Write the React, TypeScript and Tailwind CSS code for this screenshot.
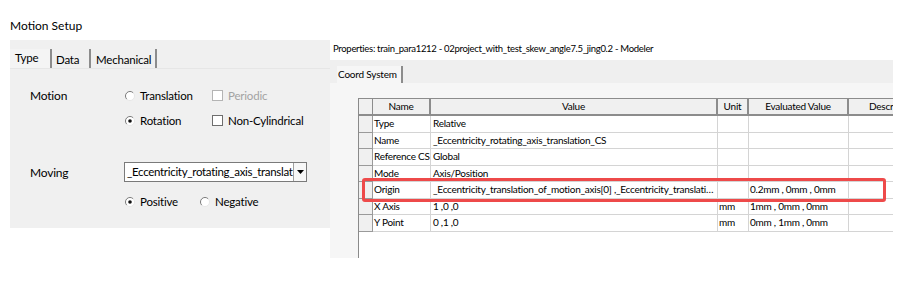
import React from "react";

const font = { fontFamily: 'Lato, "Liberation Sans", sans-serif' };

function Radio({ checked }: { checked?: boolean }) {
  return (
    <svg width="10" height="10" viewBox="0 0 10 10" className="shrink-0">
      <circle cx="5" cy="5" r="4.5" fill="#ffffff" />
      <path d="M8.2 1.8 A4.5 4.5 0 0 0 1.8 8.2" stroke="#7a7a7a" strokeWidth="1" fill="none" />
      <path d="M8.2 1.8 A4.5 4.5 0 0 1 1.8 8.2" stroke="#e6e6e6" strokeWidth="1" fill="none" />
      {checked && <circle cx="5" cy="5" r="1.8" fill="#111" />}
    </svg>
  );
}

function Check({ disabled }: { disabled?: boolean }) {
  return (
    <span
      className={
        "inline-block w-[11px] h-[11px] shrink-0 bg-white border " +
        (disabled ? "border-[#b4b4b4]" : "border-[#6e6e6e]")
      }
    />
  );
}

type Row = { name: string; value: string; unit: string; ev: string };
const rows: Row[] = [
  { name: "Type", value: "Relative", unit: "", ev: "" },
  { name: "Name", value: "_Eccentricity_rotating_axis_translation_CS", unit: "", ev: "" },
  { name: "Reference CS", value: "Global", unit: "", ev: "" },
  { name: "Mode", value: "Axis/Position", unit: "", ev: "" },
  {
    name: "Origin",
    value:
      "_Eccentricity_translation_of_motion_axis[0] ,_Eccentricity_translation_of_motion_axis[1] ,0mm",
    unit: "",
    ev: "0.2mm , 0mm , 0mm",
  },
  { name: "X Axis", value: "1 ,0 ,0", unit: "mm", ev: "1mm , 0mm , 0mm" },
  { name: "Y Point", value: "0 ,1 ,0", unit: "mm", ev: "0mm , 1mm , 0mm" },
];

const cols = "grid grid-cols-[14px_58px_287px_31px_100px_1fr]";

export default function App() {
  return (
    <div className="w-[924px] h-[304px] bg-white flex text-black overflow-hidden" style={font}>
      {/* Left: Motion Setup */}
      <div className="w-[330px] shrink-0 flex flex-col">
        <div className="h-[40px] pl-[10px] pt-[17px] text-[12px] leading-[18px]">Motion Setup</div>
        <div className="ml-[10px] w-[320px] h-[188px] bg-[#f0f0f0] flex flex-col">
          {/* tabs */}
          <div className="h-[29px] pt-[9px] flex items-stretch text-[11.5px] tracking-[-0.2px] border-b border-[#e6e6e6]">
            <div className="w-[42px] shrink-0 pl-[5px] border-r-2 border-[#8c8c8c] leading-[17px] bg-[#f4f4f4]">Type</div>
            <div className="w-[39px] shrink-0 pl-[4px] border-r-2 border-[#8c8c8c] leading-[19px] pt-[1px]">Data</div>
            <div className="w-[66px] shrink-0 pl-[5px] border-r-2 border-[#8c8c8c] leading-[19px] pt-[1px] whitespace-nowrap">Mechanical</div>
          </div>
          <div className="flex flex-col text-[11.5px] tracking-[-0.2px]">
            <div className="flex items-center h-[25px] mt-[14px]">
              <div className="w-[115px] shrink-0 pl-[20px] text-[12px]">Motion</div>
              <div className="w-[87px] shrink-0 flex items-center gap-[5px]">
                <Radio />
                <span>Translation</span>
              </div>
              <div className="flex items-center gap-[5px] text-[#a3a3a3]">
                <Check disabled />
                <span>Periodic</span>
              </div>
            </div>
            <div className="flex items-center h-[25px]">
              <div className="w-[115px] shrink-0" />
              <div className="w-[87px] shrink-0 flex items-center gap-[5px]">
                <Radio checked />
                <span>Rotation</span>
              </div>
              <div className="flex items-center gap-[5px]">
                <Check />
                <span>Non-Cylindrical</span>
              </div>
            </div>
            <div className="flex items-center h-[20px] mt-[29px]">
              <div className="w-[114px] shrink-0 pl-[20px] pt-[2px] text-[12px]">Moving</div>
              <div className="w-[183px] shrink-0 h-[20px] bg-white border border-[#7a7a7a] flex items-stretch">
                <div className="flex-1 pl-[2px] leading-[18px] overflow-hidden whitespace-nowrap tracking-[-0.3px]">
                  _Eccentricity_rotating_axis_translat
                </div>
                <div className="w-[13px] shrink-0 border-l border-[#a0a0a0] bg-[#f7f7f7] flex items-center justify-center">
                  <svg width="7" height="4" viewBox="0 0 7 4">
                    <path d="M0 0 H7 L3.5 4 Z" fill="#000" />
                  </svg>
                </div>
              </div>
            </div>
            <div className="flex items-center h-[24px] mt-[8px]">
              <div className="w-[115px] shrink-0" />
              <div className="w-[75px] shrink-0 flex items-center gap-[5px]">
                <Radio checked />
                <span>Positive</span>
              </div>
              <div className="flex items-center gap-[5px]">
                <Radio />
                <span>Negative</span>
              </div>
            </div>
          </div>
        </div>
      </div>

      {/* Right: Properties */}
      <div className="w-[563px] shrink-0 flex flex-col">
        <div className="h-[60px] pl-[3px] pt-[41px] text-[9.5px] tracking-[-0.3px] leading-[16px] whitespace-nowrap">
          Properties: train_para1212 - 02project_with_test_skew_angle7.5_jing0.2 - Modeler
        </div>
        <div className="h-[198px] bg-[#f6f6f6] flex flex-col">
          <div className="h-[23px] bg-[#efefef] flex items-end pl-[7px]">
            <div className="h-[17px] pl-[1px] pr-[4px] border-r-2 border-[#8c8c8c] text-[10px] tracking-[-0.2px] leading-[16px] bg-[#f6f6f6] whitespace-nowrap">
              Coord System
            </div>
          </div>
          <div className="flex-1 pt-[15px] pl-[28px] relative">
            <div className="w-[535px] h-[160px] bg-white border-l border-[#8a8a8a] text-[10px] tracking-[-0.25px] overflow-hidden">
              <div className={cols + " h-[18px] bg-[#f0f0f0] border-t border-b-2 border-[#8c8c8c]"}>
                <div className="border-r border-[#8c8c8c]" />
                <div className="border-r-2 border-[#8c8c8c] text-center leading-[15px]">Name</div>
                <div className="border-r-2 border-[#8c8c8c] text-center leading-[15px]">Value</div>
                <div className="border-r-2 border-[#8c8c8c] text-center leading-[15px]">Unit</div>
                <div className="border-r-2 border-[#8c8c8c] text-center leading-[15px]">Evaluated Value</div>
                <div className="pl-[20px] leading-[15px] whitespace-nowrap overflow-hidden">Description</div>
              </div>
              {rows.map((r) => (
                <div key={r.name} className={cols + " h-[16.5px] leading-[15px]"}>
                  <div className="bg-[#f0f0f0] border-r border-b border-[#9a9a9a]" />
                  <div className="pl-[1px] border-r border-b border-[#d4d4d4] whitespace-nowrap overflow-hidden">{r.name}</div>
                  <div className="pl-[2px] pr-[2px] border-r border-b border-[#d4d4d4] whitespace-nowrap overflow-hidden text-ellipsis">{r.value}</div>
                  <div className="pl-[1px] border-r border-b border-[#d4d4d4] whitespace-nowrap overflow-hidden">{r.unit}</div>
                  <div className="pl-[1px] border-r border-b border-[#d4d4d4] whitespace-nowrap overflow-hidden">{r.ev}</div>
                  <div className="border-b border-[#d4d4d4]" />
                </div>
              ))}
            </div>
            <div className="absolute left-[32px] top-[95px] w-[524px] h-[24px] border-[3px] border-[#ee4a4a] rounded-[3px] pointer-events-none" />
          </div>
        </div>
      </div>
    </div>
  );
}
